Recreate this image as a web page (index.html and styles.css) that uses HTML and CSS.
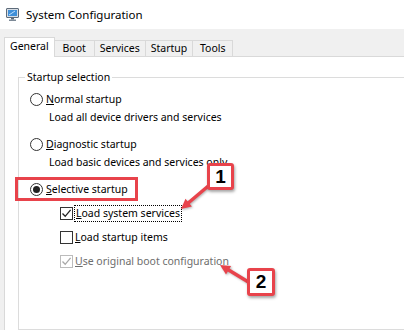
FILE: index.html
```html
<!DOCTYPE html>
<html lang="en">
<head>
    <meta charset="UTF-8">
    <title>System Configuration</title>
    <link rel="stylesheet" href="styles.css">
</head>
<body>
    <div class="window">
        <div class="titlebar">
            <svg class="app-icon" width="13" height="13" viewBox="0 0 13 13">
                <rect x="0.5" y="0.5" width="12" height="9" rx="0.5" fill="#d7dde4" stroke="#5d6b7a"/>
                <rect x="2" y="2" width="9" height="6" fill="#3f8fd8"/>
                <path d="M3 7 L9 3" stroke="#bfe0ff" stroke-width="1"/>
                <rect x="5" y="10" width="3" height="1.5" fill="#5d6b7a"/>
                <rect x="3" y="11.5" width="7" height="1.5" fill="#7d8a97"/>
            </svg>
            <span class="title">System Configuration</span>
        </div>

        <div class="dialog">
            <div class="tabs">
                <div class="tab active">General</div>
                <div class="tab">Boot</div>
                <div class="tab">Services</div>
                <div class="tab">Startup</div>
                <div class="tab">Tools</div>
            </div>

            <div class="panel">
                <fieldset class="group">
                    <legend>Startup selection</legend>

                    <div class="option">
                        <span class="radio"></span>
                        <span><u>N</u>ormal startup</span>
                    </div>
                    <div class="desc">Load all device drivers and services</div>

                    <div class="option spaced">
                        <span class="radio"></span>
                        <span><u>D</u>iagnostic startup</span>
                    </div>
                    <div class="desc">Load basic devices and services only</div>

                    <div class="option spaced">
                        <span class="radio checked"></span>
                        <span><u>S</u>elective startup</span>
                    </div>

                    <div class="checks">
                        <div class="check-row">
                            <span class="checkbox">
                                <svg width="11" height="11" viewBox="0 0 11 11"><path d="M1.5 5.5 L4.2 8.3 L9.6 1.8" fill="none" stroke="#222" stroke-width="1.3"/></svg>
                            </span>
                            <span class="focus"><u>L</u>oad system services</span>
                        </div>
                        <div class="check-row">
                            <span class="checkbox"></span>
                            <span><u>L</u>oad startup items</span>
                        </div>
                        <div class="check-row disabled">
                            <span class="checkbox">
                                <svg width="11" height="11" viewBox="0 0 11 11"><path d="M1.5 5.5 L4.2 8.3 L9.6 1.8" fill="none" stroke="#a8a8a8" stroke-width="1.3"/></svg>
                            </span>
                            <span><u>U</u>se original boot configuration</span>
                        </div>
                    </div>
                </fieldset>
            </div>
        </div>

        <!-- annotations drawn over the dialog -->
        <div class="highlight"></div>
        <svg class="arrows" width="404" height="330" viewBox="0 0 404 330">
            <line x1="213" y1="182" x2="187" y2="204" />
            <polygon points="181,209 191.9,206.5 185.5,198.7" />
            <line x1="250" y1="283" x2="227" y2="269" />
            <polygon points="220,265 231.1,265.9 226,274.4" />
        </svg>
        <div class="badge badge-1">1</div>
        <div class="badge badge-2">2</div>
    </div>
</body>
</html>
```

FILE: styles.css
```css
* {
    margin: 0;
    padding: 0;
    box-sizing: border-box;
}

body {
    font-family: 'Noto Sans', 'Open Sans', sans-serif;
    font-size: 10.5px;
    color: #000;
    background: #fff;
    overflow: hidden;
}

.window {
    position: relative;
    width: 404px;
    height: 330px;
    overflow: hidden;
}

.titlebar {
    display: flex;
    align-items: center;
    height: 29px;
    padding-left: 6px;
    background: #fff;
}

.app-icon {
    margin-right: 7px;
    margin-top: -1px;
}

.title {
    font-size: 11.5px;
}

.dialog {
    background: #f0f0f0;
    padding-left: 4px;
    height: 301px;
}

.tabs {
    display: flex;
    align-items: flex-end;
    height: 27px;
}

.tab {
    min-width: 40px;
    height: 16px;
    line-height: 15px;
    padding: 0 5px;
    text-align: center;
    border: 1px solid #d9d9d9;
    border-bottom: none;
    border-left: none;
    background: #f0f0f0;
}

.tab.active {
    position: relative;
    z-index: 1;
    height: 20px;
    line-height: 17px;
    margin-bottom: -1px;
    background: #fff;
    border-left: 1px solid #d9d9d9;
}

.panel {
    background: #fff;
    border-top: 1px solid #d9d9d9;
    border-left: 1px solid #d9d9d9;
    height: 280px;
    padding: 12px 0 0 13px;
}

.group {
    border: 1px solid #dcdcdc;
    border-right: none;
    height: 261px;
    padding: 5px 0 0 11px;
}

.group legend {
    margin-left: -5px;
    padding: 0 2px;
    line-height: 16px;
}

.option {
    display: flex;
    align-items: center;
    gap: 3px;
    height: 18px;
}

.option.spaced {
    margin-top: 9px;
}

.radio {
    position: relative;
    width: 13px;
    height: 13px;
    border: 1px solid #333;
    border-radius: 50%;
    background: #fff;
}

.radio.checked::after {
    content: "";
    position: absolute;
    left: 2px;
    top: 2px;
    width: 7px;
    height: 7px;
    border-radius: 50%;
    background: #222;
}

.desc {
    height: 18px;
    line-height: 18px;
    margin-left: 19px;
}

.checks {
    margin-left: 30px;
}

.check-row {
    display: flex;
    align-items: center;
    gap: 2px;
    height: 18px;
    margin-top: 6px;
}

.checkbox {
    display: flex;
    align-items: center;
    justify-content: center;
    width: 13px;
    height: 13px;
    border: 1px solid #333;
    background: #fff;
}

.focus {
    outline: 1px dotted #000;
    padding: 0 1px;
    line-height: 15px;
}

.check-row.disabled {
    color: #6d6d6d;
}

.check-row.disabled .checkbox {
    border-color: #bcbcbc;
}

.highlight {
    position: absolute;
    left: 15px;
    top: 177px;
    width: 123px;
    height: 24px;
    border: 3px solid #e8434b;
}

.arrows {
    position: absolute;
    left: 0;
    top: 0;
    filter: drop-shadow(1px 1px 1px rgba(0,0,0,0.3));
}

.arrows line {
    stroke: #e8434b;
    stroke-width: 3.5;
    stroke-linecap: round;
}

.arrows polygon {
    fill: #e8434b;
}

.badge {
    position: absolute;
    display: flex;
    align-items: center;
    justify-content: center;
    width: 27px;
    height: 27px;
    background: #fff;
    border: 3px solid #e8434b;
    border-radius: 3px;
    box-shadow: 1px 2px 3px rgba(0,0,0,0.35);
    font-family: 'Liberation Sans', Arial, sans-serif;
    font-weight: bold;
    font-size: 19px;
}

.badge-1 {
    left: 207px;
    top: 163px;
}

.badge-2 {
    left: 247px;
    top: 268px;
    width: 28px;
    height: 28px;
}
```
